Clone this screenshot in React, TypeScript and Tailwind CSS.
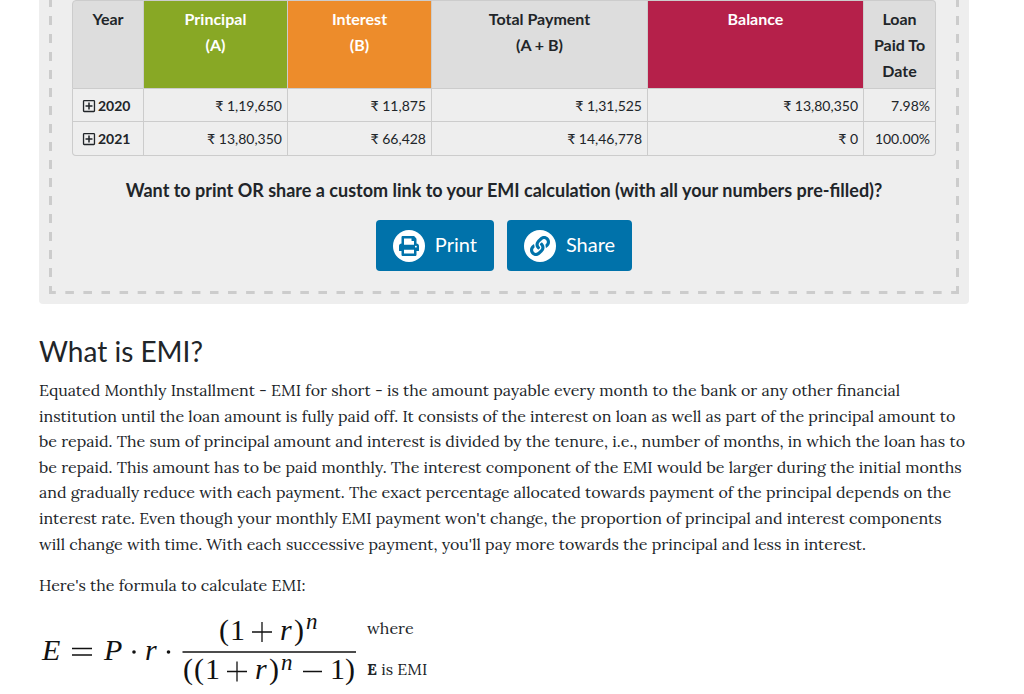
import { FaLink, FaPrint, FaRegPlusSquare } from "react-icons/fa";

const columns = [
  { lines: ["Year"], style: "w-[8.33%] bg-[#ddd]" },
  { lines: ["Principal", "(A)"], style: "w-[16.67%] bg-[#88a825] text-white" },
  { lines: ["Interest", "(B)"], style: "w-[16.67%] bg-[#ed8c2b] text-white" },
  { lines: ["Total Payment", "(A + B)"], style: "w-[25%] bg-[#ddd]" },
  { lines: ["Balance"], style: "w-[25%] bg-[#b5204a] text-white" },
  { lines: ["Loan", "Paid To", "Date"], style: "w-[8.33%] bg-[#ddd]" },
];

const payments = [
  { year: "2020", cells: ["₹ 1,19,650", "₹ 11,875", "₹ 1,31,525", "₹ 13,80,350", "7.98%"] },
  { year: "2021", cells: ["₹ 13,80,350", "₹ 66,428", "₹ 14,46,778", "₹ 0", "100.00%"] },
];

function ScheduleTable() {
  return (
    <table className="w-full table-fixed border-separate border-spacing-0 text-[14px] leading-[26px]">
      <thead className="text-[16px]">
        <tr>
          {columns.map((column) => (
            <th
              key={column.lines[0]}
              scope="col"
              className={`border-b border-r border-t border-[#ccc] px-1 pb-[4px] pt-[5px] text-center align-top font-bold first:rounded-tl first:border-l last:rounded-tr ${column.style}`}
            >
              {column.lines.map((line) => (
                <span key={line} className="block whitespace-nowrap">
                  {line}
                </span>
              ))}
            </th>
          ))}
        </tr>
      </thead>
      <tbody className="[&>tr:last-child>*]:pb-[3px] [&>tr:last-child>td:last-child]:rounded-br [&>tr:last-child>th:first-child]:rounded-bl">
        {payments.map((row) => (
          <tr key={row.year}>
            <th
              scope="row"
              className="border-b border-l border-r border-[#ccc] pb-[2px] pl-[9px] pt-[4px] font-bold"
            >
              <button type="button" className="flex items-center gap-[2px]">
                <FaRegPlusSquare className="size-[14px]" aria-hidden="true" />
                {row.year}
              </button>
            </th>
            {row.cells.map((cell, index) => (
              <td
                key={index}
                className="whitespace-nowrap border-b border-r border-[#ccc] pb-[2px] pr-[5px] pt-[4px] text-right"
              >
                {cell}
              </td>
            ))}
          </tr>
        ))}
      </tbody>
    </table>
  );
}

function ActionButton({ label, children }: { label: string; children: React.ReactNode }) {
  return (
    <button
      type="button"
      className="flex h-[51px] items-center gap-[10px] rounded bg-[#0072aa] px-[17px] text-[20px] leading-6 text-white"
    >
      <span className="flex size-8 items-center justify-center rounded-full bg-white text-[#0072aa]">
        {children}
      </span>
      <span className="pb-[3px]">{label}</span>
    </button>
  );
}

function Formula() {
  return (
    <svg
      width="318"
      height="84"
      viewBox="39 606 318 84"
      role="img"
      aria-label="EMI formula"
      className="shrink-0 font-['Liberation_Serif',serif] text-[30px]"
      fill="#111"
    >
      <g fontStyle="italic">
        <text x="42" y="660">E</text>
        <text x="104" y="660">P</text>
        <text x="145" y="660">r</text>
        <text x="280" y="640">r</text>
        <text x="255" y="679">r</text>
        <text x="306" y="629" fontSize="23">n</text>
        <text x="281" y="670" fontSize="23">n</text>
      </g>
      <text x="219" y="640">(</text>
      <text x="230" y="640">1</text>
      <text x="294" y="640">)</text>
      <text x="183" y="679">(</text>
      <text x="194" y="679">(</text>
      <text x="205" y="679">1</text>
      <text x="269" y="679">)</text>
      <text x="330" y="679">1</text>
      <text x="345" y="679">)</text>
      <circle cx="134" cy="652" r="1.8" />
      <circle cx="168.500" cy="652" r="1.8" />
      <path
        d="M72 648.500H92M72 655H92M252 632H272M262 622V642M227 671.500H247M237 661.500V681.500M303 671.500H322"
        stroke="#111"
        strokeWidth="1.3"
      />
      <path d="M182.500 652H356" stroke="#111" strokeWidth="1.5" />
    </svg>
  );
}

export default function App() {
  return (
    <main className="bg-white pl-[39px] pr-[55px] font-['Lato',sans-serif] text-[#212529]">
      <section className="rounded-b bg-[#eee] px-[10px] pb-[10px]">
        <div className="border-x-[3px] border-b-[3px] border-transparent bg-[image:linear-gradient(#ccc_4px,transparent_4px_13px,#ccc_13px),linear-gradient(#ccc_4px,transparent_4px_13px,#ccc_13px),linear-gradient(90deg,#ccc_4px,transparent_4px_13px,#ccc_13px)] bg-[position:-3px_100%,calc(100%+3px)_100%,0_calc(100%+3px)] bg-[size:3px_18px,3px_18px,18px_3px] [background-repeat:repeat-y,repeat-y,round_no-repeat] px-5 pb-5">
          <ScheduleTable />
          <h2 className="mt-5 text-center text-[18px] font-bold leading-7">
            Want to print OR share a custom link to your EMI calculation (with all your numbers
            pre-filled)?
          </h2>
          <div className="mt-4 flex justify-center gap-[13px]">
            <ActionButton label="Print">
              <FaPrint className="size-5" aria-hidden="true" />
            </ActionButton>
            <ActionButton label="Share">
              <FaLink className="size-5" aria-hidden="true" />
            </ActionButton>
          </div>
        </div>
      </section>

      <article className="mt-[30px] font-['Lora','Liberation_Serif',serif] text-[16px] leading-[1.6]">
        <h1 className="font-['Lato',sans-serif] text-[28px] leading-[34px]">What is EMI?</h1>
        <p className="mt-[10px]">
          Equated Monthly Installment - EMI for short - is the amount payable every month to the
          bank or any other financial institution until the loan amount is fully paid off. It
          consists of the interest on loan as well as part of the principal amount to be repaid.
          The sum of principal amount and interest is divided by the tenure, i.e., number of
          months, in which the loan has to be repaid. This amount has to be paid monthly. The
          interest component of the EMI would be larger during the initial months and gradually
          reduce with each payment. The exact percentage allocated towards payment of the principal
          depends on the interest rate. Even though your monthly EMI payment won't change, the
          proportion of principal and interest components will change with time. With each
          successive payment, you'll pay more towards the principal and less in interest.
        </p>
        <p className="mt-4">Here's the formula to calculate EMI:</p>
        <div className="mt-[7px] flex items-end gap-[10px]">
          <Formula />
          <div className="pb-[7px]">
            <p>where</p>
            <p className="mt-4">
              <strong>E</strong> is EMI
            </p>
          </div>
        </div>
      </article>
    </main>
  );
}
